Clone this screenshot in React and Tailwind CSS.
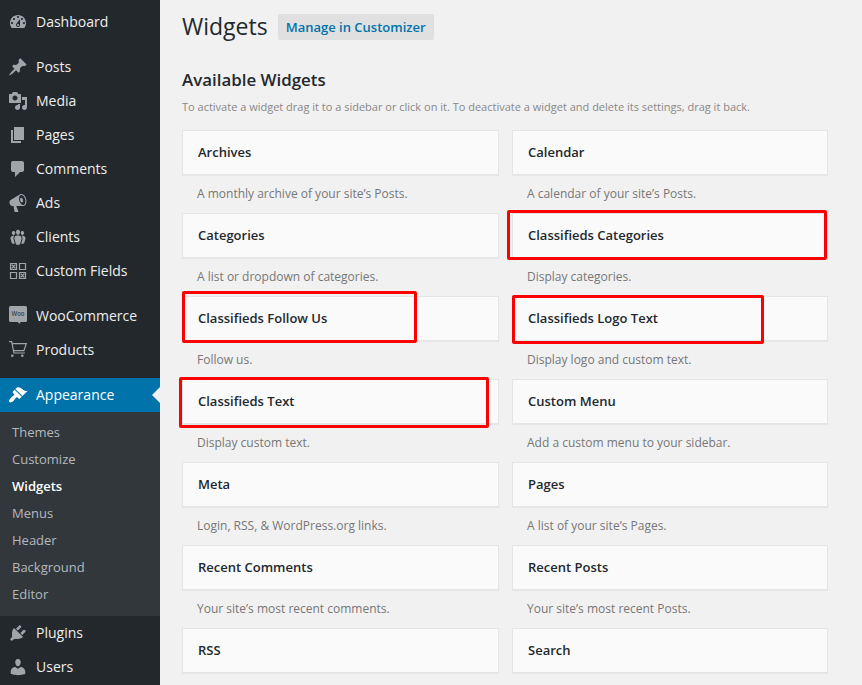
import React from "react";

const PATHS = {
  dashboard:
    "M3.76 16h12.48c1.1-1.37 1.76-3.11 1.76-5 0-4.42-3.58-8-8-8s-8 3.58-8 8c0 1.89.66 3.63 1.76 5zM10 4c.55 0 1 .45 1 1s-.45 1-1 1-1-.45-1-1 .45-1 1-1zM6 6c.55 0 1 .45 1 1s-.45 1-1 1-1-.45-1-1 .45-1 1-1zm8 0c.55 0 1 .45 1 1s-.45 1-1 1-1-.45-1-1 .45-1 1-1zm-5.37 5.55L12 7v6c0 1.1-.9 2-2 2s-2-.9-2-2c0-.57.24-1.08.63-1.45zM4 10c.55 0 1 .45 1 1s-.45 1-1 1-1-.45-1-1 .45-1 1-1zm12 0c.55 0 1 .45 1 1s-.45 1-1 1-1-.45-1-1 .45-1 1-1zm-5 3c0-.55-.45-1-1-1s-1 .45-1 1 .45 1 1 1 1-.45 1-1z",
  pin: "M10.44 3.02l1.82-1.82 6.36 6.35-1.83 1.82c-1.05-.68-2.48-.57-3.41.36l-.75.75c-.92.93-1.04 2.35-.35 3.41l-1.83 1.82-2.41-2.41-2.8 2.79c-.42.42-3.38 2.71-3.8 2.29s1.86-3.39 2.28-3.81l2.79-2.79L4.1 9.36l1.83-1.82c1.05.69 2.48.57 3.4-.36l.75-.75c.93-.92 1.05-2.35.36-3.41z",
  media:
    "M13 11V4c0-.55-.45-1-1-1h-1.67L9 1H5L3.67 3H2c-.55 0-1 .45-1 1v7c0 .55.45 1 1 1h10c.55 0 1-.45 1-1zM7 4.5c1.38 0 2.5 1.12 2.5 2.5S8.38 9.5 7 9.5 4.5 8.38 4.5 7 5.62 4.5 7 4.5zM14 6h5v10.5c0 1.38-1.12 2.5-2.5 2.5S14 17.88 14 16.5s1.12-2.5 2.5-2.5c.17 0 .34.02.5.05V9h-3V6zm-4 8.05V13h2v3.5c0 1.38-1.12 2.5-2.5 2.5S7 17.88 7 16.5 8.12 14 9.5 14c.17 0 .34.02.5.05z",
  page: "M6 15V2h10v13H6zm-1 1h8v2H3V5h2v11z",
  comment:
    "M5 2h9c1.1 0 2 .9 2 2v7c0 1.1-.9 2-2 2h-2l-5 5v-5H5c-1.1 0-2-.9-2-2V4c0-1.1.9-2 2-2z",
  megaphone:
    "M18.15 5.94c.46 1.62.38 3.22-.02 4.48-.42 1.28-1.26 2.18-2.3 2.48-.16.06-.26.06-.4.06-.06.02-.12.02-.18.02-.06.02-.14.02-.22.02h-6.8l2.22 5.5c.02.14-.06.26-.14.34-.08.1-.24.16-.34.16H6.95c-.1 0-.26-.06-.34-.16-.08-.08-.16-.2-.14-.34l-1-5.5H4.25l-.02-.02c-.5.06-1.08-.18-1.54-.62s-.88-1.08-1.06-1.88c-.24-.8-.2-1.56-.02-2.2.18-.62.58-1.08 1.06-1.3l.02-.02 9-5.4c.1-.06.18-.1.24-.16.06-.04.14-.08.24-.12.16-.08.28-.12.5-.18 1.04-.3 2.24.1 3.22.98s1.84 2.24 2.26 3.86zm-2.58 5.98h-.02c.4-.1.74-.34 1.04-.7.58-.7.86-1.76.86-3.04 0-.64-.1-1.3-.28-1.98-.34-1.36-1.02-2.5-1.78-3.24s-1.68-1.1-2.46-.88c-.82.22-1.4.96-1.7 2-.32 1.04-.28 2.36.06 3.72.38 1.36 1 2.5 1.8 3.24.78.74 1.62 1.1 2.48.88zm-2.54-7.08c.22-.04.42-.02.62.04.38.16.76.48 1.02 1s.42 1.2.42 1.78c0 .3-.04.56-.12.8-.18.48-.44.84-.86.94-.34.1-.8-.06-1.14-.4s-.64-.86-.78-1.5c-.18-.62-.12-1.24.02-1.72s.48-.84.82-.94z",
  groups:
    "M8.03 4.46c-.29 1.28.55 3.46 1.97 3.46 1.41 0 2.25-2.18 1.96-3.46-.22-.98-1.08-1.63-1.96-1.63-.89 0-1.74.65-1.97 1.63zm-4.13.9c-.25 1.08.47 2.93 1.67 2.93s1.92-1.85 1.67-2.93c-.19-.83-.92-1.39-1.67-1.39s-1.48.56-1.67 1.39zm8.86 0c-.25 1.08.47 2.93 1.66 2.93 1.2 0 1.92-1.85 1.67-2.93-.19-.83-.92-1.39-1.67-1.39-.74 0-1.47.56-1.66 1.39zm-.59 11.43l1.25-4.3C14.2 10 12.71 8.47 10 8.47c-2.72 0-4.21 1.53-3.44 4.02l1.26 4.3C8.05 17.51 9 18 10 18c.98 0 1.94-.49 2.17-1.21zm-6.1-7.63c-.49.67-.96 1.83-.42 3.59l1.12 3.79c-.34.2-.77.31-1.2.31-.85 0-1.65-.41-1.85-1.03l-1.07-3.65c-.65-2.11.61-3.4 2.92-3.4.27 0 .54.02.79.06-.1.1-.2.22-.29.33zm8.35-.39c2.31 0 3.58 1.29 2.92 3.4l-1.07 3.65c-.2.62-1 1.03-1.85 1.03-.43 0-.86-.11-1.2-.31l1.11-3.77c.55-1.78.08-2.94-.42-3.61-.08-.11-.18-.23-.28-.33.25-.04.51-.06.79-.06z",
  brush:
    "M14.48 11.06L7.41 3.99l1.5-1.5c.5-.56 2.3-.47 3.51.32 1.21.8 1.43 1.28 2.91 2.1 1.18.64 2.45 1.26 4.45.85zm-.71.71L6.7 4.7 4.93 6.47c-.39.39-.39 1.02 0 1.41l1.06 1.06c.39.39.39 1.03 0 1.42-.6.6-1.43 1.11-2.21 1.69-.35.26-.7.53-1.01.84C1.43 14.23.4 16.08 1.4 17.07c.99 1 2.84-.03 4.18-1.36.31-.31.58-.66.85-1.02.57-.78 1.08-1.61 1.69-2.21.39-.39 1.02-.39 1.41 0l1.06 1.06c.39.39 1.02.39 1.41 0z",
  plug: "M13.11 4.36L9.87 7.6 8 5.73l3.24-3.24c.35-.34 1.05-.2 1.56.32.52.51.66 1.21.31 1.55zm-8 1.77l.91-1.12 9.01 9.01-1.19.84c-.71.71-2.63 1.16-3.82 1.16H6.14L4.9 17.26c-.59.59-1.54.59-2.12 0-.59-.58-.59-1.53 0-2.12l1.24-1.24v-3.88c0-1.13.4-3.19 1.09-3.89zm7.26 3.97l3.24-3.24c.34-.35 1.04-.21 1.55.31.52.51.66 1.21.31 1.55l-3.24 3.25z",
  user: "M10 9.25c-2.27 0-2.73-3.44-2.73-3.44C7 4.02 7.82 2 9.97 2c2.16 0 2.98 2.02 2.71 3.81 0 0-.41 3.44-2.68 3.44zm0 2.57L12.72 10c2.39 0 4.52 2.33 4.52 4.53v2.49s-3.65 1.13-7.24 1.13c-3.65 0-7.24-1.13-7.24-1.13v-2.49c0-2.25 1.94-4.48 4.47-4.48z",
};

function Icon({ name }) {
  let body;
  if (name === "fields") {
    body = (
      <>
        <path
          d="M2.5 2.5h6v6h-6zM11.5 2.5h6v6h-6zM2.5 11.5h6v6h-6zM11.5 11.5h6v6h-6z"
          fill="none"
          stroke="currentColor"
          strokeWidth="1.2"
        />
        <path
          d="M4 4l3 3M7 4l-3 3M13 13l3 3M16 13l-3 3"
          fill="none"
          stroke="currentColor"
          strokeWidth="1.3"
          strokeLinecap="round"
        />
      </>
    );
  } else if (name === "woo") {
    body = (
      <>
        <path d="M2.5 0h15A1.5 1.5 0 0 1 19 1.5v13a1.5 1.5 0 0 1-1.500 1.500H12.200v2L9.500 16h-7A1.500 1.500 0 0 1 1 14.500v-13A1.500 1.500 0 0 1 2.500 0z" />
        <text
          x="10"
          y="10.300"
          textAnchor="middle"
          textLength="13"
          lengthAdjust="spacingAndGlyphs"
          fill="#3c4146"
          className="font-['Open_Sans',sans-serif] text-[6.5px] font-semibold"
        >
          Woo
        </text>
      </>
    );
  } else if (name === "cart") {
    body = (
      <>
        <path
          d="M1 1.700h2.700l2.200 11.300h11M4.100 3.600h14.200l-2.400 7H5.400"
          fill="none"
          stroke="currentColor"
          strokeWidth="1.200"
        />
        <circle cx="4.300" cy="15.800" r="1.300" />
        <circle cx="14.300" cy="15.800" r="1.300" />
      </>
    );
  } else {
    body = <path d={PATHS[name]} />;
  }
  return (
    <svg viewBox="0 0 20 20" className="h-5 w-5 shrink-0" fill="currentColor">
      {body}
    </svg>
  );
}

function MenuItem({ icon, label, active }) {
  return (
    <li
      className={
        active
          ? "relative flex h-[34px] items-center gap-2 bg-[#0073aa] pl-2 text-white"
          : "flex h-[34px] items-center gap-2 pl-2 text-[#a0a5aa]"
      }
    >
      <Icon name={icon} />
      <span className={active ? "text-sm leading-[18px] text-white" : "text-sm leading-[18px] text-[#eeeeee]"}>
        {label}
      </span>
      {active && (
        <span className="absolute right-0 top-[9px] h-0 w-0 border-y-8 border-r-8 border-y-transparent border-r-[#f1f1f1]" />
      )}
    </li>
  );
}

const SUBMENU = ["Themes", "Customize", "Widgets", "Menus", "Header", "Background", "Editor"];

const WIDGETS = [
  ["Archives", "A monthly archive of your site’s Posts."],
  ["Calendar", "A calendar of your site’s Posts."],
  ["Categories", "A list or dropdown of categories."],
  ["Classifieds Categories", "Display categories.", "-left-[6px] -top-[4px] h-[50px] w-[320px]"],
  ["Classifieds Follow Us", "Follow us.", "-left-px -top-[6px] h-[52px] w-[235px]"],
  ["Classifieds Logo Text", "Display logo and custom text.", "-left-px -top-[2px] h-[49px] w-[252px]"],
  ["Classifieds Text", "Display custom text.", "-left-[4px] -top-[3px] h-[51px] w-[310px]"],
  ["Custom Menu", "Add a custom menu to your sidebar."],
  ["Meta", "Login, RSS, & WordPress.org links."],
  ["Pages", "A list of your site’s Pages."],
  ["Recent Comments", "Your site’s most recent comments."],
  ["Recent Posts", "Your site’s most recent Posts."],
  ["RSS"],
  ["Search"],
];

function Widget({ title, description, mark }) {
  return (
    <div className="h-[83px]">
      <div className="relative flex h-[45px] items-center border border-[#e5e5e5] bg-[#fafafa] pb-0.5 pl-[15px] shadow-[0_1px_1px_rgba(0,0,0,0.04)]">
        <h3 className="text-[13px] font-semibold leading-5 text-[#23282d]">{title}</h3>
        {mark && <span className={`absolute z-10 rounded-xs border-3 border-[#ff0000] ${mark}`} />}
      </div>
      {description && (
        <p className="pl-[15px] pt-[9px] text-xs leading-[19px] text-[#777777]">{description}</p>
      )}
    </div>
  );
}

export default function App() {
  return (
    <div className="flex h-[685px] w-[862px] overflow-hidden bg-[#f1f1f1] font-['Open_Sans',sans-serif]">
      <nav className="w-40 shrink-0 bg-[#23282d] pt-[5px]">
        <ul>
          <MenuItem icon="dashboard" label="Dashboard" />
        </ul>
        <ul className="mt-[11px]">
          <MenuItem icon="pin" label="Posts" />
          <MenuItem icon="media" label="Media" />
          <MenuItem icon="page" label="Pages" />
          <MenuItem icon="comment" label="Comments" />
          <MenuItem icon="megaphone" label="Ads" />
          <MenuItem icon="groups" label="Clients" />
          <MenuItem icon="fields" label="Custom Fields" />
        </ul>
        <ul className="mt-[11px]">
          <MenuItem icon="woo" label="WooCommerce" />
          <MenuItem icon="cart" label="Products" />
        </ul>
        <ul className="mt-[11px]">
          <MenuItem icon="brush" label="Appearance" active />
        </ul>
        <ul className="bg-[#32373c] pb-2 pt-[7px]">
          {SUBMENU.map((s) => (
            <li
              key={s}
              className={
                s === "Widgets"
                  ? "h-[27px] pl-3 text-[13px] font-semibold leading-[27px] text-white"
                  : "h-[27px] pl-3 text-[13px] leading-[27px] text-[#b4b9be]"
              }
            >
              {s}
            </li>
          ))}
        </ul>
        <ul>
          <MenuItem icon="plug" label="Plugins" />
          <MenuItem icon="user" label="Users" />
        </ul>
      </nav>
      <main className="w-[668px] shrink-0 pl-[22px] pt-3">
        <div className="flex h-[29px] items-center gap-[10px]">
          <h1 className="text-[23px] font-normal leading-[29px] text-[#23282d]">Widgets</h1>
          <a className="mt-px flex h-[26px] items-center rounded-xs bg-[#e0e0e0] px-2 text-[13px] font-semibold leading-[18px] text-[#0073aa]">
            Manage in Customizer
          </a>
        </div>
        <h2 className="mt-[27px] text-[16.9px] font-semibold leading-6 text-[#23282d]">Available Widgets</h2>
        <p className="mt-[6px] h-[18px] whitespace-nowrap text-[11px] leading-[18px] text-[#888888]">
          To activate a widget drag it to a sidebar or click on it. To deactivate a widget and delete its settings, drag
          it back.
        </p>
        <div className="mt-[14px] grid grid-cols-[317px_316px] gap-x-[13px]">
          {WIDGETS.map(([title, description, mark]) => (
            <Widget key={title} title={title} description={description} mark={mark} />
          ))}
        </div>
      </main>
    </div>
  );
}
